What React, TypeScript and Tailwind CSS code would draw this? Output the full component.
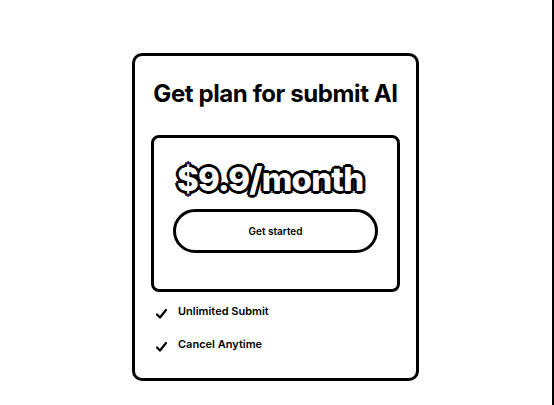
import React from "react";

function Check() {
  return (
    <svg width="11" height="10" viewBox="0 0 11 10" className="shrink-0">
      <path d="M1 5.5 L4 8.5 L10 1" fill="none" stroke="#000" strokeWidth="2.2" strokeLinecap="round" strokeLinejoin="round" />
    </svg>
  );
}

export default function App() {
  return (
    <div className="relative w-[554px] h-[405px] bg-white overflow-hidden font-['Inter',sans-serif] text-black">
      <div className="absolute right-0 top-0 h-full w-[2px] bg-black" />
      <div className="ml-[132px] mt-[53px] w-[287px] h-[328px] border-[3px] border-black rounded-[10px] px-4 pt-[22px] flex flex-col">
        <h1 className="text-center text-[24px] leading-8 font-bold tracking-[-0.4px]">
          Get plan for submit AI
        </h1>
        <div className="mt-[25px] h-[157px] border-[3px] border-black rounded-[8px] px-[19px] pt-[25px] flex flex-col">
          <div className="pl-[4px] text-[33px] leading-8 font-extrabold tracking-[-0.8px] text-white [text-shadow:3px_0_0_#000,-3px_0_0_#000,0_3px_0_#000,0_-3px_0_#000,2px_2px_0_#000,-2px_-2px_0_#000,2px_-2px_0_#000,-2px_2px_0_#000]">
            $9.9/month
          </div>
          <button className="mt-[14px] h-[44px] w-full rounded-full border-[3px] border-black bg-white text-[10px] font-semibold">
            Get started
          </button>
        </div>
        <div className="mt-[11px] flex flex-col gap-[17px] pl-[5px]">
          <div className="flex items-center gap-[11px]">
            <span className="mt-[5px]"><Check /></span>
            <span className="text-[11px] font-semibold leading-4">Unlimited Submit</span>
          </div>
          <div className="flex items-center gap-[11px]">
            <span className="mt-[5px]"><Check /></span>
            <span className="text-[11px] font-semibold leading-4">Cancel Anytime</span>
          </div>
        </div>
      </div>
    </div>
  );
}
